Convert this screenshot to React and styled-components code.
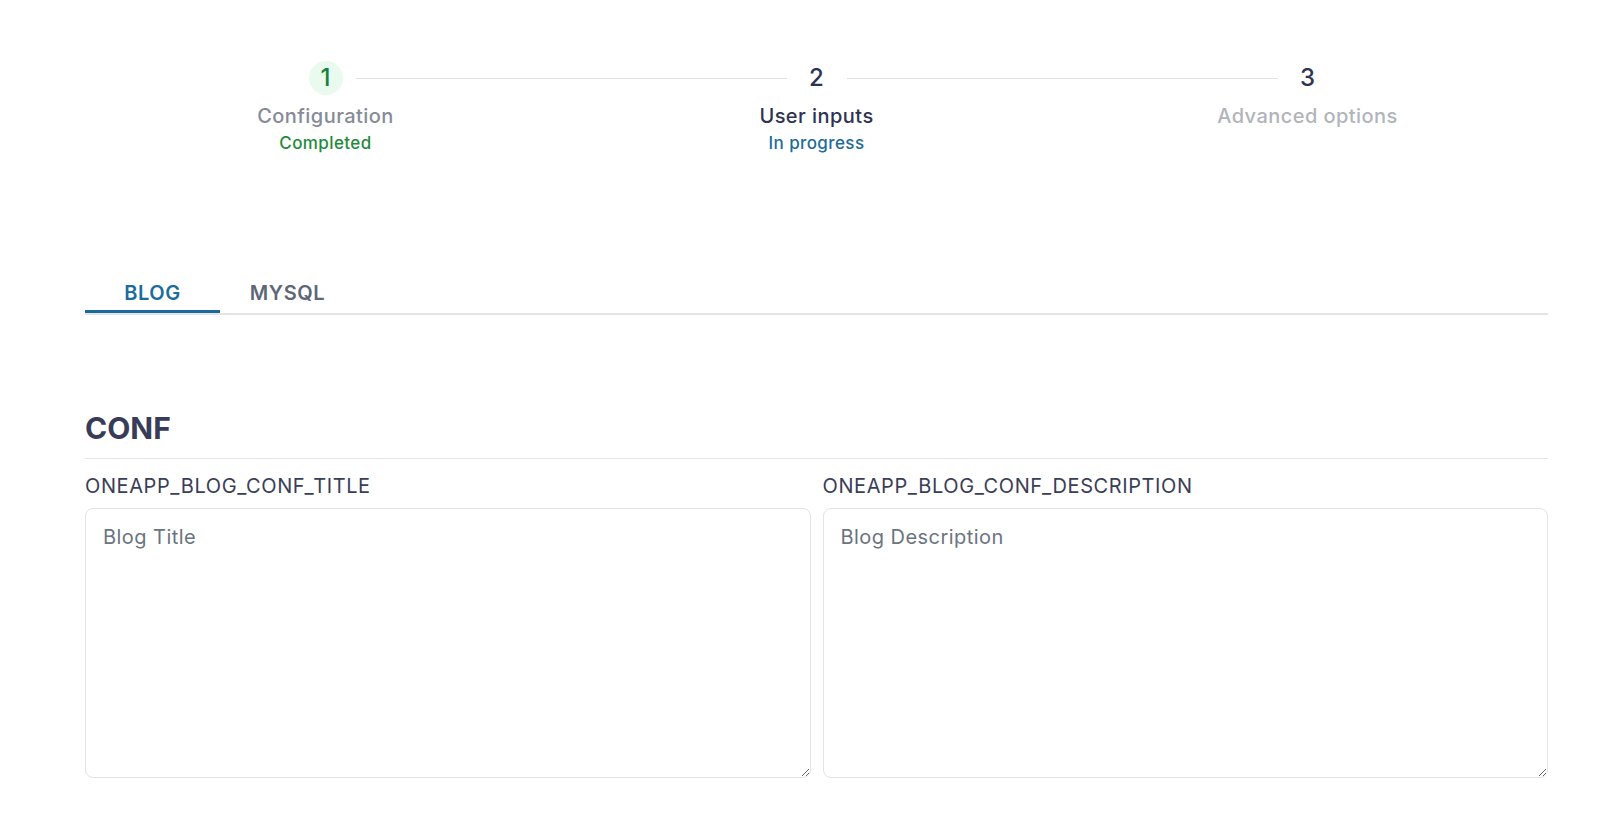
import React from "react";
import styled, { createGlobalStyle } from "styled-components";

const Global = createGlobalStyle`
  html, body { margin: 0; padding: 0; background: #ffffff; }
  body { font-family: Inter, "Noto Sans", sans-serif; -webkit-font-smoothing: antialiased; }
  * { box-sizing: border-box; }
`;

const Page = styled.div`
  padding: 61px 55px 40px 85px;
`;

const Stepper = styled.div`
  display: grid;
  grid-template-columns: repeat(3, 1fr);
  margin: 0 -5px;
`;

const Step = styled.div`
  display: flex;
  flex-direction: column;
  align-items: center;
`;

const StepHead = styled.div`
  display: flex;
  align-items: center;
  width: 100%;
  height: 34px;
`;

const Line = styled.div`
  flex: 1;
  height: 1px;
  background: ${(p) => (p.$hidden ? "transparent" : "#e2e2e4")};
  margin: ${(p) => (p.$side === "left" ? "0 13px 0 0" : "0 0 0 13px")};
`;

const Circle = styled.div`
  width: 34px;
  height: 34px;
  border-radius: 50%;
  display: flex;
  align-items: center;
  justify-content: center;
  background: ${(p) => (p.$done ? "#e9fbef" : "transparent")};
  color: ${(p) => (p.$done ? "#16823a" : "#2e3352")};
  font-size: 24px;
  font-weight: 500;
  line-height: 34px;
`;

const StepLabel = styled.div`
  margin-top: 7px;
  font-size: 20px;
  line-height: 28px;
  font-weight: 500;
  letter-spacing: 0.45px;
  color: ${(p) => p.$color};
`;

const StepStatus = styled.div`
  margin-top: 1px;
  font-size: 17px;
  line-height: 24px;
  font-weight: 500;
  letter-spacing: 0.4px;
  color: ${(p) => p.$color};
`;

const TabList = styled.div`
  margin-top: 116px;
  display: flex;
  border-bottom: 2px solid #e4e4e6;
`;

const Tab = styled.button`
  min-width: 135px;
  padding: 8px 16px 3px;
  border: none;
  background: none;
  font-family: inherit;
  font-size: 20px;
  line-height: 28px;
  font-weight: 600;
  letter-spacing: 0.6px;
  text-align: center;
  cursor: pointer;
  color: ${(p) => (p.$active ? "#1b6c9c" : "#5e6776")};
  border-bottom: 3px solid ${(p) => (p.$active ? "#1a6a9c" : "transparent")};
`;

const Section = styled.section`
  margin-top: 95px;
`;

const Heading = styled.h2`
  margin: 0;
  font-size: 30px;
  line-height: 36px;
  font-weight: 700;
  color: #383c58;
  padding-bottom: 12px;
  border-bottom: 1px solid #e4e4e6;
`;

const Fields = styled.div`
  margin-top: 13px;
  display: grid;
  grid-template-columns: 1fr 1fr;
  gap: 12px;
`;

const Field = styled.div`
  display: flex;
  flex-direction: column;
`;

const Label = styled.label`
  font-size: 20px;
  line-height: 28px;
  font-weight: 400;
  letter-spacing: 0.6px;
  color: #3a3e57;
  margin-bottom: 8px;
`;

const TextArea = styled.textarea`
  height: 270px;
  width: 100%;
  border: 1px solid #e3e3e6;
  border-radius: 8px;
  padding: 14px 17px;
  font-family: inherit;
  font-size: 20px;
  line-height: 28px;
  letter-spacing: 0.45px;
  color: #3a3e57;
  outline: none;
  resize: vertical;
  &::placeholder {
    color: #6b7480;
  }
`;

const steps = [
  { n: 1, label: "Configuration", status: "Completed", done: true, labelColor: "#878a97", statusColor: "#1f8b3b" },
  { n: 2, label: "User inputs", status: "In progress", labelColor: "#2e3352", statusColor: "#1e6b9c" },
  { n: 3, label: "Advanced options", labelColor: "#b1b4bb" },
];

export default function App() {
  return (
    <>
      <Global />
      <Page>
        <Stepper>
          {steps.map((s, i) => (
            <Step key={s.n}>
              <StepHead>
                <Line $side="left" $hidden={i === 0} />
                <Circle $done={s.done}>{s.n}</Circle>
                <Line $side="right" $hidden={i === steps.length - 1} />
              </StepHead>
              <StepLabel $color={s.labelColor}>{s.label}</StepLabel>
              {s.status && <StepStatus $color={s.statusColor}>{s.status}</StepStatus>}
            </Step>
          ))}
        </Stepper>

        <TabList>
          <Tab $active>BLOG</Tab>
          <Tab>MYSQL</Tab>
        </TabList>

        <Section>
          <Heading>CONF</Heading>
          <Fields>
            <Field>
              <Label>ONEAPP_BLOG_CONF_TITLE</Label>
              <TextArea placeholder="Blog Title" />
            </Field>
            <Field>
              <Label>ONEAPP_BLOG_CONF_DESCRIPTION</Label>
              <TextArea placeholder="Blog Description" />
            </Field>
          </Fields>
        </Section>
      </Page>
    </>
  );
}
